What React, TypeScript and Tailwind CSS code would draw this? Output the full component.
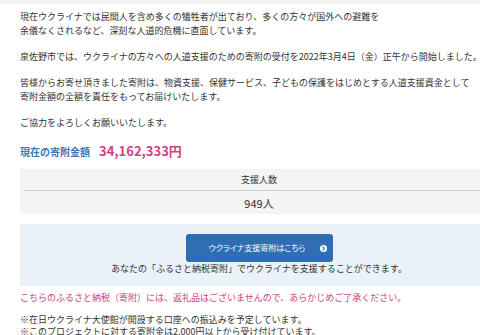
import React from 'react';

const font = { fontFamily: '"Noto Sans CJK JP", "Noto Sans", sans-serif' };

const ArrowCircle = () => (
  <svg width="7" height="7" viewBox="0 0 16 16" className="inline-block shrink-0">
    <circle cx="8" cy="8" r="8" fill="#ffffff" />
    <path d="M6.5 4.5 L10 8 L6.5 11.5" stroke="#2f6db5" strokeWidth="2.6" fill="none" strokeLinecap="round" strokeLinejoin="round" />
  </svg>
);

const App: React.FC = () => {
  return (
    <div className="w-[480px] h-[335px] overflow-hidden bg-white text-[#333]" style={font}>
      <div className="h-[4px] bg-[#f2f2f2]" />
      <div className="w-[478px] ml-[20px] pt-[6px] text-[9px] leading-[14px]">
        <p>
          現在ウクライナでは民間人を含め多くの犠牲者が出ており、多くの方々が国外への避難を
          <br />
          余儀なくされるなど、深刻な人道的危機に直面しています。
        </p>
        <p className="mt-[12px]">
          泉佐野市では、ウクライナの方々への人道支援のための寄附の受付を2022年3月4日（金）正午から開始しました。
        </p>
        <p className="mt-[12px]">
          皆様からお寄せ頂きました寄附は、物資支援、保健サービス、子どもの保護をはじめとする人道支援資金として
          <br />
          寄附金額の全額を責任をもってお届けいたします。
        </p>
        <p className="mt-[12px]">ご協力をよろしくお願いいたします。</p>

        <div className="mt-[14px] flex items-baseline gap-[9px]">
          <span className="text-[10px] font-bold text-[#3a78b8]">現在の寄附金額</span>
          <span className="text-[13px] font-bold text-[#d0437f]">34,162,333円</span>
        </div>

        <div className="mt-[10px] bg-[#f4f4f4] px-[4px]">
          <div className="h-[22px] flex items-center justify-center text-[9px] border-b border-[#c9d1da]">支援人数</div>
          <div className="h-[23px] flex items-center justify-center text-[11px]">949人</div>
        </div>

        <div className="mt-[10px] bg-[#e9f1f9] pt-[10px] pb-[11px] flex flex-col items-center">
          <div className="w-[147px] h-[28px] rounded-[3px] bg-[#2f6db5] text-white flex items-center justify-between pl-[23px] pr-[6px] text-[8px] whitespace-nowrap">
            <span className="[font-feature-settings:'palt']">ウクライナ支援寄附はこちら</span>
            <ArrowCircle />
          </div>
          <p className="text-[9px] leading-[13px]">あなたの「ふるさと納税寄附」でウクライナを支援することができます。</p>
        </div>

        <p className="mt-[5px] text-[#c8457e] text-[9px]">こちらのふるさと納税（寄附）には、返礼品はございませんので、あらかじめご了承ください。</p>

        <div className="mt-[9px] text-[9px] leading-[12px]">
          <p>※在日ウクライナ大使館が開設する口座への振込みを予定しています。</p>
          <p>※このプロジェクトに対する寄附金は2,000円以上から受け付けています。</p>
        </div>
      </div>
    </div>
  );
};

export default App;
